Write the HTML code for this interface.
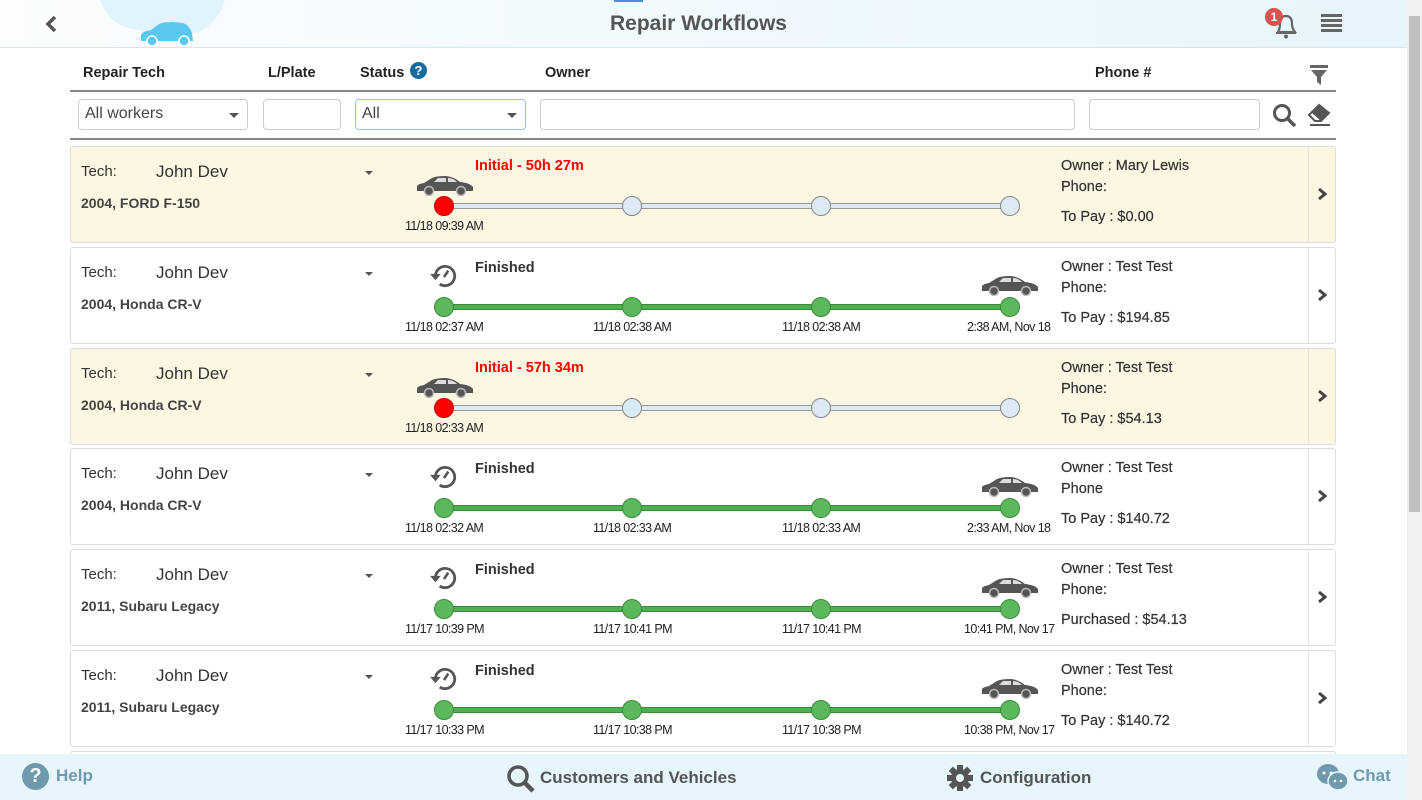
<!DOCTYPE html>
<html style="width:1422px;height:800px;overflow:hidden"><head><meta charset="utf-8"><style>
*{box-sizing:border-box;margin:0;padding:0}
body{width:1422px;height:800px;overflow:hidden;font-family:"Liberation Sans",Arial,sans-serif;background:#fff;position:relative;color:#333}
.hdr{position:absolute;left:0;top:0;width:1407px;height:48px;background:linear-gradient(90deg,#fbfdfe,#e6f6fc);border-bottom:1px solid #d6e6ee;overflow:hidden}
.sb{position:absolute;right:0;top:0;width:15px;height:800px;background:#f1f1f1}
.sb div{position:absolute;left:2px;top:16px;width:11px;height:496px;background:#c1c1c1}
.a{position:absolute;white-space:nowrap}
.lbl{font-size:14.5px;font-weight:bold;color:#222}
.inp{position:absolute;top:99px;height:31px;border:1px solid #ccc;border-radius:4px;background:#fff;font-size:16px;color:#444;padding:5px 6px}
.card{position:absolute;left:70px;width:1266px;height:97px;border:1px solid #ddd;border-radius:3px;background:#fff}
.card.y{background:#fcf7e3}
.card .div{position:absolute;left:1237px;top:0;width:1px;height:95px;background:#e3e3e3}
.t1{font-size:15px;color:#333}
.nm{font-size:17px;color:#333}
.md{font-size:14px;font-weight:bold;color:#444}
.st{font-size:14.5px;font-weight:bold;color:#333}
.st.r{color:#f00}
.line{position:absolute;height:6px;border:1px solid #999;background:#dbeaf3}
.line.g{background:#4caf50;border-color:#3a8a3c}
.nd{position:absolute;width:20px;height:20px;border-radius:50%;border:1px solid #888;background:#dbeaf3}
.nd.g{background:#5cb85c;border-color:#3d8b3d}
.nd.r{background:#f00;border-color:#c00}
.dt{font-size:12.5px;color:#222;letter-spacing:-0.6px}
.rt{font-size:14.5px;color:#333;-webkit-text-stroke:0.2px #333}
.ft{position:absolute;left:0;top:754px;width:1407px;height:46px;background:#e6f6fc}
.ft .a{font-size:17px;font-weight:bold}
</style></head><body>
<div class="hdr">
 <svg class="a" style="left:100px;top:0" width="130" height="48"><path d="M0 0 Q10 28 40 30 Q60 42 90 34 Q115 30 125 0Z" fill="#e1f3fb"/></svg>
 <svg class="a" style="left:139px;top:21px" width="56" height="26" viewBox="0 0 56 26"><path d="M2 20 L2 14 Q4 10 12 9 L20 3 Q24 1 34 1 L44 2 Q50 4 53 12 L54 20Z" fill="#5bc8f2"/><circle cx="13" cy="20" r="5" fill="#5bc8f2" stroke="#fff" stroke-width="1.5"/><circle cx="45" cy="20" r="5" fill="#5bc8f2" stroke="#fff" stroke-width="1.5"/></svg>
 <svg class="a" style="left:44px;top:15px" width="14" height="18"><path d="M11 2 L4 9 L11 16" stroke="#555" stroke-width="3.5" fill="none"/></svg>
 <div class="a" style="left:610px;top:12px;font-size:21px;font-weight:bold;color:#555">Repair Workflows</div>
 <div class="a" style="left:614px;top:0;width:29px;height:2px;background:#4a90d9"></div>
 <svg class="a" style="left:1272px;top:10px" width="28" height="30" viewBox="0 0 28 30"><path d="M6 22 Q8 18 8 14 Q8 6 14 6 Q20 6 20 14 Q20 18 23 22Z" fill="none" stroke="#666" stroke-width="2.2"/><path d="M4 23 H24" stroke="#666" stroke-width="2"/><circle cx="14" cy="26.5" r="2" fill="#666"/></svg>
 <div class="a" style="left:1265px;top:8px;width:18px;height:18px;border-radius:50%;background:#d9534f;color:#fff;font-size:12px;font-weight:bold;text-align:center;line-height:18px">1</div>
 <div class="a" style="left:1321px;top:14px;width:21px;height:3px;background:#666;box-shadow:0 5px 0 #666,0 10px 0 #666,0 15px 0 #666"></div>
</div>
<div class="sb"><div></div></div>

<div class="a lbl" style="left:83px;top:65px">Repair Tech</div>
<div class="a lbl" style="left:268px;top:65px">L/Plate</div>
<div class="a lbl" style="left:360px;top:65px">Status</div>
<div class="a" style="left:410px;top:62px;width:17px;height:17px;border-radius:50%;background:#1a6aa0;color:#fff;font-size:13px;font-weight:bold;text-align:center;line-height:17px">?</div>
<div class="a lbl" style="left:545px;top:65px">Owner</div>
<div class="a lbl" style="left:1095px;top:65px">Phone #</div>
<svg class="a" style="left:1310px;top:65px" width="18" height="20"><path d="M0 0H18V3H0Z M1 5H17L11 12V20L7 17V12Z" fill="#666"/></svg>
<div class="a" style="left:70px;top:90px;width:1266px;height:2px;background:#888"></div>
<div class="inp" style="left:78px;width:170px">All workers<span style="position:absolute;right:8px;top:13px;border:5px solid transparent;border-top-color:#555;border-bottom:0"></span></div>
<div class="inp" style="left:263px;width:78px"></div>
<div class="inp" style="left:355px;width:171px;border-color:#9ec2e6">All<span style="position:absolute;right:8px;top:13px;border:5px solid transparent;border-top-color:#555;border-bottom:0"></span></div>
<div class="inp" style="left:540px;width:535px"></div>
<div class="inp" style="left:1089px;width:171px"></div>
<svg class="a" style="left:1272px;top:103px" width="26" height="26"><circle cx="10" cy="10" r="7.5" fill="none" stroke="#555" stroke-width="3"/><path d="M15.5 15.5 L23 23" stroke="#555" stroke-width="3.5"/></svg>
<svg class="a" style="left:1306px;top:102px" width="26" height="26"><path d="M3 13 L13 3 L23 11 L15 19 L9 19Z" fill="none" stroke="#555" stroke-width="2"/><path d="M13 3 L23 11 L15 19 L6 11Z" fill="#555"/><path d="M4 23H24" stroke="#555" stroke-width="2"/></svg>
<div class="a" style="left:70px;top:138px;width:1266px;height:2px;background:#888"></div>

<svg width="0" height="0" style="position:absolute"><defs>
<symbol id="car" viewBox="0 0 58 20"><path d="M1 15 L1 10 Q2 8 8 7 L16 2 Q20 0 30 0 Q38 1 44 6 Q54 7 57 11 L57 15Z" fill="#555"/><path d="M18 6 L22 2 L30 2 L30 6Z M32 6 L32 2 Q37 2 41 6Z" fill="#ddd"/><circle cx="13" cy="15" r="4.5" fill="#555" stroke="#bbb" stroke-width="1.5"/><circle cx="45" cy="15" r="4.5" fill="#555" stroke="#bbb" stroke-width="1.5"/></symbol>
<symbol id="hist" viewBox="0 0 28 28"><path d="M6 14 A9 9 0 1 1 10 21.5" fill="none" stroke="#555" stroke-width="2.6"/><path d="M1 12 L6 18 L11 12Z" fill="#555"/><path d="M14 15 L18 9" stroke="#555" stroke-width="2.4"/></symbol>
</defs></svg>

<div class="card y" style="top:146px"><div class="div"></div>
 <div class="a t1" style="left:10px;top:16px">Tech:</div><div class="a nm" style="left:85px;top:15px">John Dev</div>
 <div class="a" style="left:294px;top:24px;border:4.5px solid transparent;border-top-color:#555;border-bottom:0"></div>
 <div class="a md" style="left:10px;top:48px">2004, FORD F-150</div>
 <div class="a st r" style="left:404px;top:11px">Initial - 50h 27m</div>
 <svg class="a" style="left:345px;top:29px" width="58" height="20"><use href="#car"/></svg>
 <div class="line" style="left:381px;top:56px;width:558px"></div>
 <div class="nd r" style="left:363px;top:49px"></div><div class="nd" style="left:551px;top:49px"></div><div class="nd" style="left:740px;top:49px"></div><div class="nd" style="left:929px;top:49px"></div>
 <div class="a dt" style="left:334px;top:72px">11/18 09:39 AM</div>
 <div class="a rt" style="left:990px;top:11px">Owner : Mary Lewis</div><div class="a rt" style="left:990px;top:32px">Phone:</div><div class="a rt" style="left:990px;top:62px">To Pay : $0.00</div>
 <svg class="a" style="left:1245px;top:40px" width="12" height="14"><path d="M3 2 L9 7 L3 12" stroke="#444" stroke-width="3" fill="none"/></svg>
</div>

<div class="card" style="top:247px"><div class="div"></div>
 <div class="a t1" style="left:10px;top:16px">Tech:</div><div class="a nm" style="left:85px;top:15px">John Dev</div>
 <div class="a" style="left:294px;top:24px;border:4.5px solid transparent;border-top-color:#555;border-bottom:0"></div>
 <div class="a md" style="left:10px;top:48px">2004, Honda CR-V</div>
 <div class="a st" style="left:404px;top:12px">Finished</div>
 <svg class="a" style="left:358px;top:13px" width="30" height="30"><use href="#hist"/></svg>
 <svg class="a" style="left:910px;top:28px" width="58" height="20"><use href="#car"/></svg>
 <div class="line g" style="left:381px;top:56px;width:558px"></div>
 <div class="nd g" style="left:363px;top:49px"></div><div class="nd g" style="left:551px;top:49px"></div><div class="nd g" style="left:740px;top:49px"></div><div class="nd g" style="left:929px;top:49px"></div>
 <div class="a dt" style="left:334px;top:72px">11/18 02:37 AM</div><div class="a dt" style="left:522px;top:72px">11/18 02:38 AM</div><div class="a dt" style="left:711px;top:72px">11/18 02:38 AM</div><div class="a dt" style="left:896px;top:72px">2:38 AM, Nov 18</div>
 <div class="a rt" style="left:990px;top:11px">Owner : Test Test</div><div class="a rt" style="left:990px;top:32px">Phone:</div><div class="a rt" style="left:990px;top:62px">To Pay : $194.85</div>
 <svg class="a" style="left:1245px;top:40px" width="12" height="14"><path d="M3 2 L9 7 L3 12" stroke="#444" stroke-width="3" fill="none"/></svg>
</div>

<div class="card y" style="top:348px"><div class="div"></div>
 <div class="a t1" style="left:10px;top:16px">Tech:</div><div class="a nm" style="left:85px;top:15px">John Dev</div>
 <div class="a" style="left:294px;top:24px;border:4.5px solid transparent;border-top-color:#555;border-bottom:0"></div>
 <div class="a md" style="left:10px;top:48px">2004, Honda CR-V</div>
 <div class="a st r" style="left:404px;top:11px">Initial - 57h 34m</div>
 <svg class="a" style="left:345px;top:29px" width="58" height="20"><use href="#car"/></svg>
 <div class="line" style="left:381px;top:56px;width:558px"></div>
 <div class="nd r" style="left:363px;top:49px"></div><div class="nd" style="left:551px;top:49px"></div><div class="nd" style="left:740px;top:49px"></div><div class="nd" style="left:929px;top:49px"></div>
 <div class="a dt" style="left:334px;top:72px">11/18 02:33 AM</div>
 <div class="a rt" style="left:990px;top:11px">Owner : Test Test</div><div class="a rt" style="left:990px;top:32px">Phone:</div><div class="a rt" style="left:990px;top:62px">To Pay : $54.13</div>
 <svg class="a" style="left:1245px;top:40px" width="12" height="14"><path d="M3 2 L9 7 L3 12" stroke="#444" stroke-width="3" fill="none"/></svg>
</div>

<div class="card" style="top:448px"><div class="div"></div>
 <div class="a t1" style="left:10px;top:16px">Tech:</div><div class="a nm" style="left:85px;top:15px">John Dev</div>
 <div class="a" style="left:294px;top:24px;border:4.5px solid transparent;border-top-color:#555;border-bottom:0"></div>
 <div class="a md" style="left:10px;top:48px">2004, Honda CR-V</div>
 <div class="a st" style="left:404px;top:12px">Finished</div>
 <svg class="a" style="left:358px;top:13px" width="30" height="30"><use href="#hist"/></svg>
 <svg class="a" style="left:910px;top:28px" width="58" height="20"><use href="#car"/></svg>
 <div class="line g" style="left:381px;top:56px;width:558px"></div>
 <div class="nd g" style="left:363px;top:49px"></div><div class="nd g" style="left:551px;top:49px"></div><div class="nd g" style="left:740px;top:49px"></div><div class="nd g" style="left:929px;top:49px"></div>
 <div class="a dt" style="left:334px;top:72px">11/18 02:32 AM</div><div class="a dt" style="left:522px;top:72px">11/18 02:33 AM</div><div class="a dt" style="left:711px;top:72px">11/18 02:33 AM</div><div class="a dt" style="left:896px;top:72px">2:33 AM, Nov 18</div>
 <div class="a rt" style="left:990px;top:11px">Owner : Test Test</div><div class="a rt" style="left:990px;top:32px">Phone</div><div class="a rt" style="left:990px;top:62px">To Pay : $140.72</div>
 <svg class="a" style="left:1245px;top:40px" width="12" height="14"><path d="M3 2 L9 7 L3 12" stroke="#444" stroke-width="3" fill="none"/></svg>
</div>

<div class="card" style="top:549px"><div class="div"></div>
 <div class="a t1" style="left:10px;top:16px">Tech:</div><div class="a nm" style="left:85px;top:15px">John Dev</div>
 <div class="a" style="left:294px;top:24px;border:4.5px solid transparent;border-top-color:#555;border-bottom:0"></div>
 <div class="a md" style="left:10px;top:48px">2011, Subaru Legacy</div>
 <div class="a st" style="left:404px;top:12px">Finished</div>
 <svg class="a" style="left:358px;top:13px" width="30" height="30"><use href="#hist"/></svg>
 <svg class="a" style="left:910px;top:28px" width="58" height="20"><use href="#car"/></svg>
 <div class="line g" style="left:381px;top:56px;width:558px"></div>
 <div class="nd g" style="left:363px;top:49px"></div><div class="nd g" style="left:551px;top:49px"></div><div class="nd g" style="left:740px;top:49px"></div><div class="nd g" style="left:929px;top:49px"></div>
 <div class="a dt" style="left:334px;top:72px">11/17 10:39 PM</div><div class="a dt" style="left:522px;top:72px">11/17 10:41 PM</div><div class="a dt" style="left:711px;top:72px">11/17 10:41 PM</div><div class="a dt" style="left:893px;top:72px">10:41 PM, Nov 17</div>
 <div class="a rt" style="left:990px;top:11px">Owner : Test Test</div><div class="a rt" style="left:990px;top:32px">Phone:</div><div class="a rt" style="left:990px;top:62px">Purchased : $54.13</div>
 <svg class="a" style="left:1245px;top:40px" width="12" height="14"><path d="M3 2 L9 7 L3 12" stroke="#444" stroke-width="3" fill="none"/></svg>
</div>

<div class="card" style="top:650px"><div class="div"></div>
 <div class="a t1" style="left:10px;top:16px">Tech:</div><div class="a nm" style="left:85px;top:15px">John Dev</div>
 <div class="a" style="left:294px;top:24px;border:4.5px solid transparent;border-top-color:#555;border-bottom:0"></div>
 <div class="a md" style="left:10px;top:48px">2011, Subaru Legacy</div>
 <div class="a st" style="left:404px;top:12px">Finished</div>
 <svg class="a" style="left:358px;top:13px" width="30" height="30"><use href="#hist"/></svg>
 <svg class="a" style="left:910px;top:28px" width="58" height="20"><use href="#car"/></svg>
 <div class="line g" style="left:381px;top:56px;width:558px"></div>
 <div class="nd g" style="left:363px;top:49px"></div><div class="nd g" style="left:551px;top:49px"></div><div class="nd g" style="left:740px;top:49px"></div><div class="nd g" style="left:929px;top:49px"></div>
 <div class="a dt" style="left:334px;top:72px">11/17 10:33 PM</div><div class="a dt" style="left:522px;top:72px">11/17 10:38 PM</div><div class="a dt" style="left:711px;top:72px">11/17 10:38 PM</div><div class="a dt" style="left:893px;top:72px">10:38 PM, Nov 17</div>
 <div class="a rt" style="left:990px;top:11px">Owner : Test Test</div><div class="a rt" style="left:990px;top:32px">Phone:</div><div class="a rt" style="left:990px;top:62px">To Pay : $140.72</div>
 <svg class="a" style="left:1245px;top:40px" width="12" height="14"><path d="M3 2 L9 7 L3 12" stroke="#444" stroke-width="3" fill="none"/></svg>
</div>
<div class="card" style="top:751px;height:49px"></div>

<div class="ft">
 <div class="a" style="left:22px;top:9px;width:27px;height:27px;border-radius:50%;background:#6f9aae;color:#fff;font-size:20px;font-weight:bold;text-align:center;line-height:27px">?</div>
 <div class="a" style="left:56px;top:12px;color:#6f9aae">Help</div>
 <svg class="a" style="left:506px;top:10px" width="30" height="30"><circle cx="12" cy="12" r="9" fill="none" stroke="#555" stroke-width="3.5"/><path d="M18 18 L27 27" stroke="#555" stroke-width="4.5"/></svg>
 <div class="a" style="left:540px;top:14px;color:#555">Customers and Vehicles</div>
 <svg class="a" style="left:946px;top:10px" width="28" height="28" viewBox="0 0 28 28"><g fill="#555"><circle cx="14" cy="14" r="9"/><rect x="11" y="1" width="6" height="26"/><rect x="1" y="11" width="26" height="6"/><rect x="11" y="1" width="6" height="26" transform="rotate(45 14 14)"/><rect x="11" y="1" width="6" height="26" transform="rotate(-45 14 14)"/></g><circle cx="14" cy="14" r="4" fill="#e6f6fc"/></svg>
 <div class="a" style="left:980px;top:14px;color:#555">Configuration</div>
 <svg class="a" style="left:1316px;top:9px" width="34" height="30"><ellipse cx="12" cy="11" rx="11" ry="10" fill="#6f9aae"/><ellipse cx="22" cy="18" rx="10" ry="9" fill="#6f9aae" stroke="#e6f6fc" stroke-width="1.5"/><g fill="#fff"><circle cx="8" cy="10" r="1.5"/><circle cx="15" cy="10" r="1.5"/><circle cx="19" cy="18" r="1.3"/><circle cx="25" cy="18" r="1.3"/></g></svg>
 <div class="a" style="left:1353px;top:12px;color:#6f9aae">Chat</div>
</div>
</body></html>
